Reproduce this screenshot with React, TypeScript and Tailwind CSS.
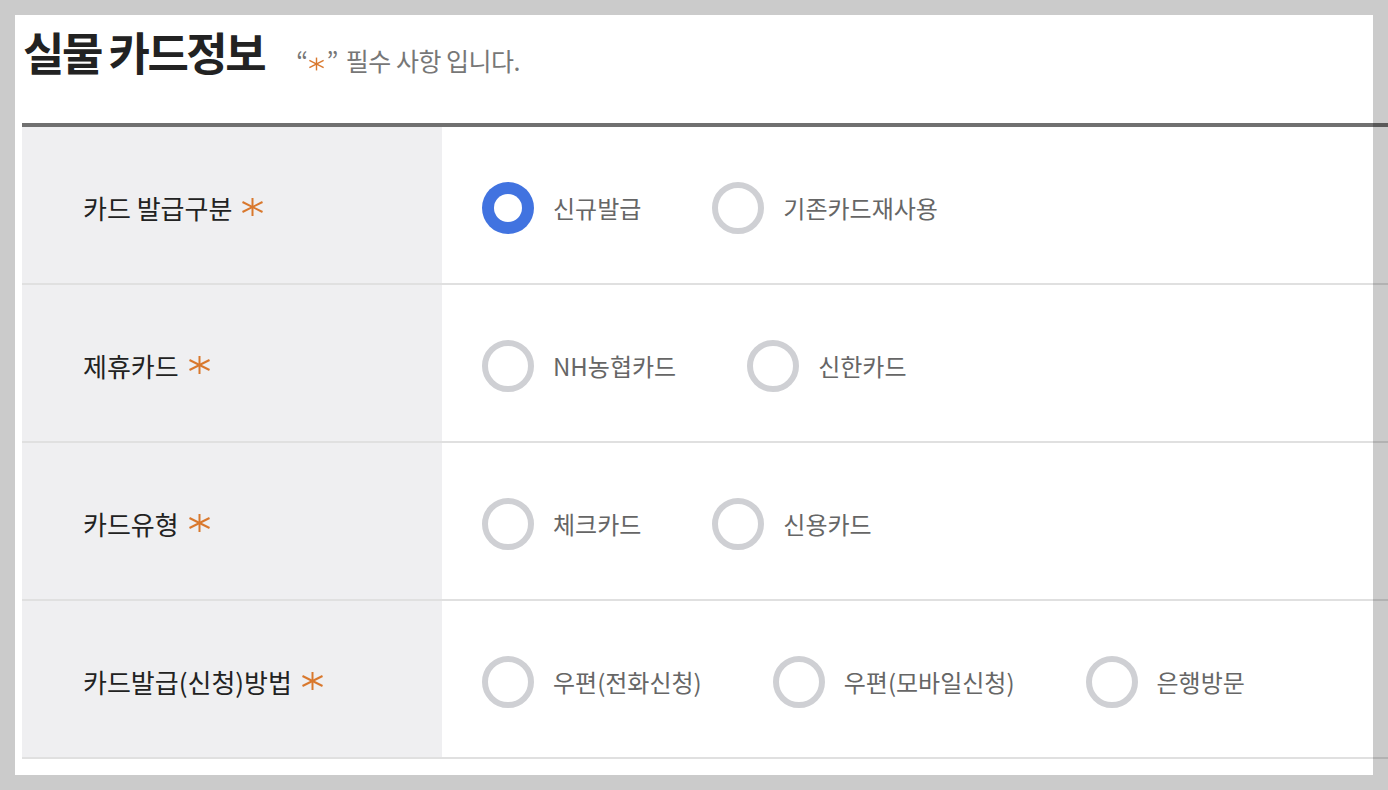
import React from 'react'

const rows = [
  { label: '카드 발급구분', options: ['신규발급', '기존카드재사용'], selected: 0 },
  { label: '제휴카드', options: ['NH농협카드', '신한카드'], selected: -1 },
  { label: '카드유형', options: ['체크카드', '신용카드'], selected: -1 },
  { label: '카드발급(신청)방법', options: ['우편(전화신청)', '우편(모바일신청)', '은행방문'], selected: -1 },
]

// 6-armed asterisk used as the "required" mark
const Asterisk = ({ w = 21, h = 18 }: { w?: number; h?: number }) => (
  <svg width={w} height={h} viewBox="0 0 21 18" className="inline-block">
    <g stroke="#d9782d" strokeWidth="2">
      <line x1="10.5" y1="0" x2="10.5" y2="18" />
      <line x1="0.5" y1="4" x2="20.5" y2="14" />
      <line x1="0.5" y1="14" x2="20.5" y2="4" />
    </g>
  </svg>
)

const Radio = ({ checked }: { checked: boolean }) =>
  checked ? (
    <span className="flex h-[52px] w-[52px] shrink-0 items-center justify-center rounded-full bg-[#4173e0]">
      <span className="h-[28px] w-[28px] rounded-full bg-white" />
    </span>
  ) : (
    <span className="h-[52px] w-[52px] shrink-0 rounded-full border-[6px] border-[#cfd0d4] bg-white" />
  )

export default function App() {
  return (
    <div
      className="h-[790px] w-[1388px] overflow-hidden bg-[#cbcbcb] pl-[15px] pt-[15px]"
      style={{ fontFamily: '"Noto Sans CJK KR", "Noto Sans", sans-serif' }}
    >
      <div className="h-[760px] w-[1358px] bg-white pl-[7px]">
        {/* Header */}
        <div className="flex h-[108px] items-baseline pt-[14px]">
          <h2 className="ml-[1px] text-[45px] font-bold leading-[46px] tracking-[-2.5px] text-[#222]">실물 카드정보</h2>
          <p className="ml-[32px] flex items-baseline text-[25px] tracking-[-0.5px] text-[#777]">
            <span>“</span>
            <span className="mx-[2px] self-center">
              <Asterisk w={15} h={18} />
            </span>
            <span>”</span>
            <span className="ml-[8px]">필수 사항 입니다.</span>
          </p>
        </div>

        {/* Form table */}
        <div className="w-[1366px] border-t-4 border-[rgba(0,0,0,0.56)]">
          {rows.map((row) => (
            <div key={row.label} className="flex h-[158px] border-b-2 border-[rgba(0,0,0,0.12)]">
              <div className="flex w-[420px] items-center bg-[#efeff1] pl-[61px] pt-[4px] text-[26px] text-[#222]">
                <span>{row.label}</span>
                <span className="ml-[10px] flex">
                  <Asterisk />
                </span>
              </div>
              <div className="flex flex-1 items-center pl-[40px] pt-[6px]">
                {row.options.map((opt, i) => (
                  <label key={opt} className="mr-[71px] flex items-center">
                    <Radio checked={i === row.selected} />
                    <span className="ml-[19px] text-[24px] text-[#666]">{opt}</span>
                  </label>
                ))}
              </div>
            </div>
          ))}
        </div>
      </div>
    </div>
  )
}
